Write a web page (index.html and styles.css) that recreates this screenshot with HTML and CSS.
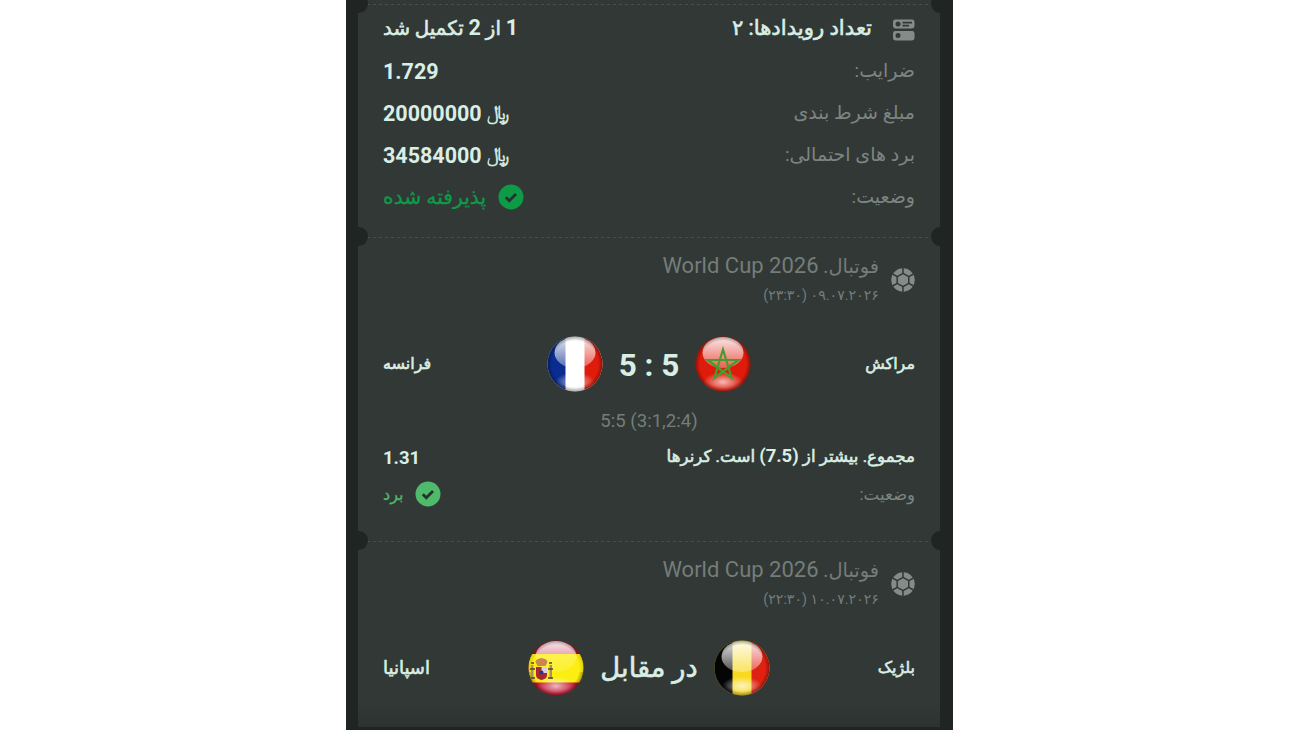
FILE: index.html
```html
<!DOCTYPE html>
<html lang="fa" dir="rtl">
<head>
    <meta charset="UTF-8">
    <meta name="viewport" content="width=device-width, initial-scale=1.0">
    <title>World Cup 2026</title>
    <link rel="stylesheet" href="styles.css">
</head>
<body>

<!-- shared icons and gradients -->
<svg class="defs" width="0" height="0">
    <defs>
        <linearGradient id="gloss" x1="0" y1="0" x2="0" y2="1">
            <stop offset="0" stop-color="#fff" stop-opacity="0.9"/>
            <stop offset="1" stop-color="#fff" stop-opacity="0.3"/>
        </linearGradient>
        <radialGradient id="glow" cx="0.5" cy="0.5" r="0.5">
            <stop offset="0" stop-color="#fff" stop-opacity="0.7"/>
            <stop offset="1" stop-color="#fff" stop-opacity="0"/>
        </radialGradient>
        <radialGradient id="edge" cx="0.5" cy="0.5" r="0.5">
            <stop offset="0.84" stop-color="#000" stop-opacity="0"/>
            <stop offset="1" stop-color="#000" stop-opacity="0.35"/>
        </radialGradient>
        <clipPath id="round"><circle cx="30" cy="30" r="27.5"/></clipPath>
        <symbol id="shine" viewBox="0 0 60 60">
            <ellipse cx="30" cy="48" rx="20" ry="9.5" fill="url(#glow)"/>
            <ellipse cx="30" cy="18.5" rx="20.5" ry="15.5" fill="url(#gloss)"/>
            <circle cx="30" cy="30" r="27.5" fill="url(#edge)"/>
        </symbol>
        <symbol id="ball" viewBox="0 0 24 24">
            <circle cx="12" cy="12" r="11.7" fill="#838c89"/>
            <path d="M12 5.3l5.8 3.35v6.7L12 18.7l-5.8-3.35v-6.7z" fill="#838c89" stroke="#323836" stroke-width="1.5"/>
            <path d="M12 5.3V0M17.8 8.65L22.4 6M17.8 15.35l4.6 2.65M12 18.7V24M6.2 15.35L1.6 18M6.2 8.65L1.6 6" stroke="#323836" stroke-width="1.5"/>
        </symbol>
        <symbol id="check" viewBox="0 0 26 26">
            <circle cx="13" cy="13" r="12.5" fill="currentColor"/>
            <path d="M7.8 13.2l3.5 3.5 6.7-6.8" fill="none" stroke="#26332c" stroke-width="2.8"/>
        </symbol>
    </defs>
</svg>

<div class="phone">
    <div class="card">

        <div class="section summary">
            <div class="row strong">
                <div class="events">
                    <svg class="list-icon" viewBox="0 0 22 22">
                        <rect y="0.5" width="21.5" height="9" rx="2.4" fill="#838c89"/>
                        <circle cx="5" cy="5" r="2.5" fill="#323836"/>
                        <path d="M9.5 3.6H19M9.5 6.6H16" stroke="#323836" stroke-width="1.6"/>
                        <rect y="12" width="21.5" height="9.5" rx="2.4" fill="#838c89"/>
                        <circle cx="5" cy="16.6" r="2.5" fill="#323836"/>
                    </svg>
                    <span class="t-events">تعداد رویدادها: ۲</span>
                </div>
                <span class="t-done"><b>1</b> از <b>2</b> تکمیل شد</span>
            </div>
            <div class="row">
                <span class="label">ضرایب:</span>
                <span class="number">1.729</span>
            </div>
            <div class="row">
                <span class="label">مبلغ شرط بندی</span>
                <span class="number" dir="ltr">20000000 <i>﷼</i></span>
            </div>
            <div class="row">
                <span class="label">برد های احتمالی:</span>
                <span class="number" dir="ltr">34584000 <i>﷼</i></span>
            </div>
            <div class="row">
                <span class="label">وضعیت:</span>
                <span class="status accepted"><svg><use href="#check"/></svg>پذیرفته شده</span>
            </div>
        </div>

        <div class="section">
            <div class="league">
                <svg class="ball"><use href="#ball"/></svg>
                <div>
                    <div class="league-name"><span>فوتبال.</span> <b>World Cup 2026</b></div>
                    <div class="date">۰۹.۰۷.۲۰۲۶ (۲۳:۳۰)</div>
                </div>
            </div>
            <div class="match">
                <span class="team">مراکش</span>
                <div class="versus">
                    <svg class="flag" viewBox="0 0 60 60">
                        <g clip-path="url(#round)">
                            <rect width="60" height="60" fill="#df1c0c"/>
                        </g>
                        <use href="#shine"/>
                        <path d="M30 15.5l8.7 28.5L14.5 26h31L21.3 44z" fill="none" stroke="#4a9a2c" stroke-width="2.2"/>
                    </svg>
                    <span class="score">5 : 5</span>
                    <svg class="flag" viewBox="0 0 60 60">
                        <g clip-path="url(#round)">
                            <rect width="60" height="60" fill="#fff"/>
                            <rect width="20.5" height="60" fill="#0a2c91"/>
                            <rect x="39.5" width="20.5" height="60" fill="#df1c0c"/>
                        </g>
                        <use href="#shine"/>
                    </svg>
                </div>
                <span class="team end">فرانسه</span>
            </div>
            <div class="periods" dir="ltr">5:5 (3:1,2:4)</div>
            <div class="bet">
                <span class="market">مجموع. بیشتر از <b>(7.5)</b> است. کرنرها</span>
                <span class="odd">1.31</span>
            </div>
            <div class="bet">
                <span class="label small">وضعیت:</span>
                <span class="status won"><svg><use href="#check"/></svg>برد</span>
            </div>
        </div>

        <div class="section">
            <div class="league">
                <svg class="ball"><use href="#ball"/></svg>
                <div>
                    <div class="league-name"><span>فوتبال.</span> <b>World Cup 2026</b></div>
                    <div class="date">۱۰.۰۷.۲۰۲۶ (۲۲:۳۰)</div>
                </div>
            </div>
            <div class="match">
                <span class="team">بلژیک</span>
                <div class="versus">
                    <svg class="flag" viewBox="0 0 60 60">
                        <g clip-path="url(#round)">
                            <rect width="60" height="60" fill="#f8d820"/>
                            <rect width="20.5" height="60" fill="#050505"/>
                            <rect x="39.5" width="20.5" height="60" fill="#e02010"/>
                        </g>
                        <use href="#shine"/>
                    </svg>
                    <span class="vs">در مقابل</span>
                    <svg class="flag" viewBox="0 0 60 60">
                        <g clip-path="url(#round)">
                            <rect width="60" height="60" fill="#c41230"/>
                            <rect y="16" width="60" height="28.5" fill="#fcee10"/>
                        </g>
                        <use href="#shine"/>
                        <g clip-path="url(#round)">
                            <rect y="16" x="3" width="54" height="18" fill="#fcee10" opacity="0.6"/>
                            <path d="M5 27h2.5v14H5zM23.500 27H26v14h-2.500z" fill="#a8916a"/>
                            <path d="M4 31h5M22 31h5M4 40h5M22 40h5M5 25h3M23 25h3" stroke="#5a4030" stroke-width="1.5"/>
                            <path d="M9.500 24q0-3 6-4 6 1 6 4l-2 4h-8z" fill="#c98552"/>
                            <path d="M10 29h11v8q0 4-5.5 5-5.5-1-5.5-5z" fill="#a82832"/>
                            <path d="M15.5 29H21v6h-5.5z" fill="#d8cfe0"/>
                            <circle cx="15.5" cy="34.5" r="2" fill="#20398a"/>
                        </g>
                    </svg>
                </div>
                <span class="team end spain">اسپانیا</span>
            </div>
        </div>

    </div>
</div>

</body>
</html>
```
FILE: styles.css
```css
body {
    font-family: Roboto, "Noto Sans", "DejaVu Sans", sans-serif;
    margin: 0;
    background-color: #fff;
    overflow: hidden;
}

.defs {
    position: absolute;
}

.phone {
    width: 607px;
    height: 730px;
    margin: 0 auto;
    box-sizing: border-box;
    padding: 0 12.5px;
    background-color: #202423;
}

.card {
    height: 727px;
    padding-top: 4px;
    box-sizing: border-box;
    background: linear-gradient(#323836 705px, #2c3230);
    color: #d9eee4;
    overflow: hidden;
}

/* dotted tear line with a notch at each end */
.section {
    position: relative;
    box-sizing: border-box;
    height: 304px;
    padding: 13px 25px 0;
    background: repeating-linear-gradient(90deg, #47504c 0 3px, transparent 3px 6px) 9px 0 / calc(100% - 18px) 1px no-repeat;
}

.summary {
    height: 233px;
    padding-top: 3px;
}

.section::before,
.section::after {
    content: "";
    position: absolute;
    top: -10px;
    width: 19px;
    height: 19px;
    border-radius: 50%;
    background: #202423;
}

.section::before {
    left: -9.5px;
}

.section::after {
    right: -9.5px;
}

.row {
    height: 42px;
    display: flex;
    align-items: center;
    justify-content: space-between;
    white-space: nowrap;
}

.events {
    display: flex;
    align-items: center;
    gap: 21px;
}

.list-icon {
    width: 22px;
    height: 22px;
    margin-top: 4px;
}

/* medium weight for the persian text */
.strong,
.team,
.vs,
.market {
    -webkit-text-stroke: 0.6px currentColor;
}

.strong {
    font-weight: normal;
}

.t-events {
    font-size: 21.2px;
    padding-bottom: 2px;
}

.t-done {
    font-size: 19.8px;
    padding-bottom: 1px;
}

.t-done b,
.number {
    font-size: 21.5px;
    font-weight: bold;
    -webkit-text-stroke: 0;
}

.number {
    padding-top: 2px;
}

.number i {
    font-style: normal;
    font-weight: normal;
    font-size: 20px;
    -webkit-text-stroke: 0.6px currentColor;
    display: inline-block;
    line-height: 20px;
    vertical-align: 2px;
}

.label {
    font-size: 19px;
    color: #7c8582;
}

.small {
    font-size: 16.6px;
}

.status {
    display: flex;
    align-items: center;
    gap: 12px;
    font-size: 20.3px;
    -webkit-text-stroke: 0.3px currentColor;
}

.status svg {
    width: 26px;
    height: 26px;
}

.accepted {
    color: #0d9b48;
    padding-top: 1px;
}

.won {
    color: #4fb96c;
    font-size: 16px;
    padding-bottom: 1px;
}

.league {
    display: flex;
    align-items: center;
    gap: 12px;
    height: 60px;
    color: #747d7a;
    white-space: nowrap;
}

.ball {
    width: 24px;
    height: 24px;
}

.league-name {
    height: 32px;
    line-height: 32px;
    font-size: 19.4px;
}

.league-name b {
    font-size: 22px;
    font-weight: normal;
}

.date {
    height: 28px;
    line-height: 27px;
    font-size: 14.2px;
}

.match {
    display: grid;
    grid-template-columns: 1fr auto 1fr;
    align-items: center;
    height: 60px;
    margin-top: 24px;
}

.versus {
    display: flex;
    align-items: center;
    gap: 14px;
}

.flag {
    width: 60px;
    height: 60px;
}

.team {
    font-size: 16px;
    padding-bottom: 2px;
}

.spain {
    font-size: 18px;
}

.end {
    text-align: left;
}

.score {
    font-size: 31.5px;
    font-weight: bold;
    padding-top: 2px;
}

.vs {
    font-size: 27.4px;
}

.periods {
    height: 45px;
    line-height: 54px;
    text-align: center;
    font-size: 18.6px;
    color: #747d7a;
}

.bet {
    display: flex;
    align-items: center;
    justify-content: space-between;
    height: 37px;
    white-space: nowrap;
}

.market {
    font-size: 16.7px;
    padding-bottom: 3px;
}

.market b,
.odd {
    font-size: 18.5px;
    font-weight: bold;
    -webkit-text-stroke: 0;
}
```
